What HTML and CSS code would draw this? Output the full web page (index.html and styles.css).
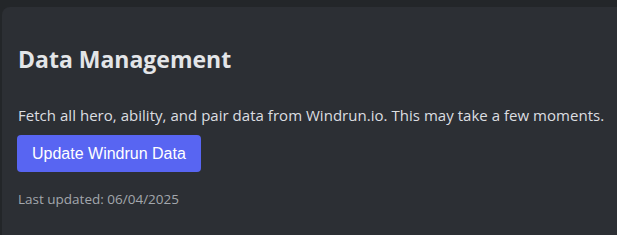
FILE: index.html
```html
<!DOCTYPE html>
<html>
<head>
<meta charset="utf-8">
<link rel="stylesheet" href="styles.css">
</head>
<body>
<section class="card">
  <h2 class="title">Data Management</h2>
  <p class="desc">Fetch all hero, ability, and pair data from Windrun.io. This may take a few moments.</p>
  <button class="btn">Update Windrun Data</button>
  <p class="meta">Last updated: 06/04/2025</p>
</section>
</body>
</html>
```
FILE: styles.css
```css
html, body {
  margin: 0;
  padding: 0;
  background: #232629;
  overflow: hidden;
}
body {
  font-family: "Open Sans", "Noto Sans", sans-serif;
  color: #dcdee1;
}
.card {
  box-sizing: border-box;
  margin: 7px 0 0 2px;
  height: calc(100vh - 7px);
  padding: 24px 0 0 16px;
  background: #2c2f34;
  border-radius: 8px 0 0 0;
}
.title {
  margin: 12px 0 0 0;
  font-size: 23px;
  font-weight: 700;
  line-height: 32px;
  color: #e3e5e8;
}
.desc {
  margin: 29px 0 0 0;
  font-size: 15px;
  line-height: 22px;
  letter-spacing: 0.03px;
  white-space: nowrap;
  color: #dcdee1;
}
.btn {
  display: block;
  margin: 9px 0 0 -1px;
  height: 37px;
  padding: 0 15px;
  border: none;
  border-radius: 4px;
  background: #5865f2;
  color: #ffffff;
  font-family: "Liberation Sans", Arial, sans-serif;
  font-size: 16px;
}
.meta {
  margin: 17px 0 0 0;
  font-size: 13.5px;
  line-height: 20px;
  color: #a3a7ad;
}
```
